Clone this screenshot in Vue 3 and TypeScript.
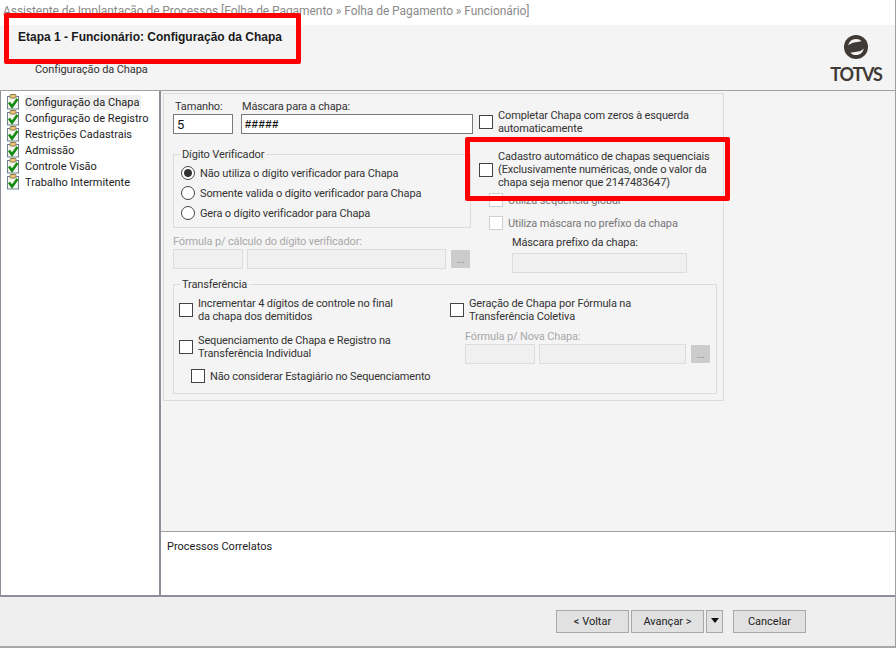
<script setup lang="ts">
const steps: string[] = [
  'Configuração da Chapa',
  'Configuração de Registro',
  'Restrições Cadastrais',
  'Admissão',
  'Controle Visão',
  'Trabalho Intermitente',
]
const radios: string[] = [
  'Não utiliza o dígito verificador para Chapa',
  'Somente valida o dígito verificador para Chapa',
  'Gera o dígito verificador para Chapa',
]
</script>

<template>
  <div class="win">
    <div class="titlebar">Assistente de Implantação de Processos [Folha de Pagamento » Folha de Pagamento » Funcionário]</div>
    <header class="head">
      <div class="head-text">
        <h1>Etapa 1 - Funcionário: Configuração da Chapa</h1>
        <p>Configuração da Chapa</p>
      </div>
      <div class="logo">
        <svg width="24" height="24" viewBox="0 0 24 24">
          <circle cx="12" cy="12" r="12" fill="#3f3a36" />
          <path d="M4.3 10.6C4.8 6.8 8 4 12 4c2.2 0 4.2.9 5.6 2.3L10 7.4c-2.4.4-4.4 1.6-5.7 3.2z" fill="#f4f4f4" />
          <path d="M19.7 13.4C19.2 17.2 16 20 12 20c-2.2 0-4.2-.9-5.6-2.3l7.6-1.1c2.4-.4 4.4-1.6 5.7-3.2z" fill="#f4f4f4" />
        </svg>
        <span>TOTVS</span>
      </div>
    </header>

    <main class="body">
      <nav class="steps">
        <div v-for="(s, i) in steps" :key="s" class="step">
          <svg width="14" height="16" viewBox="0 0 14 16" class="step-ico">
            <rect x="1.5" y="2.5" width="11" height="12.5" fill="#f4f4ec" stroke="#6f7f96" />
            <rect x="4" y="0.5" width="6" height="3.5" rx="1" fill="#e8c878" stroke="#8a7a4a" />
            <path d="M3 8.5l3 4 5.5-7.5" fill="none" stroke="#128a12" stroke-width="2.6" />
          </svg>
          <span :class="{ sel: i === 0 }">{{ s }}</span>
        </div>
      </nav>

      <section class="content">
        <div class="pane">
          <div class="frame">
            <div class="top">
              <div class="left">
                <div class="row-mask">
                  <label class="fld fld-size"><b>Tamanho:</b><span class="input">5</span></label>
                  <label class="fld fld-mask"><b>Máscara para a chapa:</b><span class="input mono">#####</span></label>
                </div>
                <fieldset class="group dv">
                  <legend>Dígito Verificador</legend>
                  <div v-for="(r, i) in radios" :key="r" class="radio">
                    <span class="dot" :class="{ on: i === 0 }"></span>{{ r }}
                  </div>
                </fieldset>
                <div class="off-label formula-l">Fórmula p/ cálculo do dígito verificador:</div>
                <div class="formula">
                  <span class="input off w70"></span>
                  <span class="input off w199"></span>
                  <span class="dots">...</span>
                </div>
              </div>

              <div class="right">
                <div class="check c1"><span class="box"></span><span class="txt">Completar Chapa com zeros à esquerda<br />automaticamente</span></div>
                <div class="check c2"><span class="box"></span><span class="txt">Cadastro automático de chapas sequenciais<br />(Exclusivamente numéricas, onde o valor da<br />chapa seja menor que 2147483647)</span></div>
                <div class="check c3 off-check"><span class="box off"></span><span class="txt">Utiliza sequência global</span></div>
                <div class="check c4 off-check"><span class="box off"></span><span class="txt">Utiliza máscara no prefixo da chapa</span></div>
                <div class="prefix">Máscara prefixo da chapa:</div>
                <span class="input off prefix-in"></span>
              </div>
            </div>

            <fieldset class="group tr">
              <legend>Transferência</legend>
              <div class="tr-grid">
                <div class="tr-left">
                  <div class="check"><span class="box"></span><span class="txt">Incrementar 4 dígitos de controle no final<br />da chapa dos demitidos</span></div>
                  <div class="check t2"><span class="box"></span><span class="txt">Sequenciamento de Chapa e Registro na<br />Transferência Individual</span></div>
                  <div class="check t3"><span class="box"></span><span class="txt">Não considerar Estagiário no Sequenciamento</span></div>
                </div>
                <div class="tr-right">
                  <div class="check"><span class="box"></span><span class="txt">Geração de Chapa por Fórmula na<br />Transferência Coletiva</span></div>
                  <div class="off-label nova-l">Fórmula p/ Nova Chapa:</div>
                  <div class="formula">
                    <span class="input off w70"></span>
                    <span class="input off w147"></span>
                    <span class="dots">...</span>
                  </div>
                </div>
              </div>
            </fieldset>
          </div>
        </div>
        <div class="related">Processos Correlatos</div>
      </section>
    </main>

    <footer class="foot">
      <button class="btn">&lt; Voltar</button>
      <button class="btn next">Avançar &gt;</button>
      <button class="btn drop"><i></i></button>
      <button class="btn cancel">Cancelar</button>
    </footer>

    <div class="mark mark-a"></div>
    <div class="mark mark-b"></div>
  </div>
</template>

<style>
html, body { margin: 0; background: #fff; }
</style>

<style scoped>
.win {
  position: relative;
  width: 896px;
  height: 648px;
  overflow: hidden;
  display: flex;
  flex-direction: column;
  box-sizing: border-box;
  font: 11px/13px Roboto, "Liberation Sans", Arial, sans-serif;
  color: #222;
  background: #f4f4f4;
  border-right: 1px solid #a0a0a0;
}
.titlebar {
  height: 25px;
  flex: none;
  background: #fff;
  color: #8a8a8a;
  font-size: 12px;
  letter-spacing: -0.07px;
  padding: 5px 0 0 3px;
  box-sizing: border-box;
  white-space: nowrap;
}
.head {
  height: 66px;
  flex: none;
  display: flex;
  justify-content: space-between;
  box-sizing: border-box;
  border-bottom: 1px solid #a0a0a0;
}
.head h1 {
  margin: 6px 0 0 18px;
  font-family: "Liberation Sans", Arial, sans-serif;
  font-size: 12px;
  line-height: 13px;
  font-weight: bold;
  color: #1a1a1a;
}
.head p { margin: 19px 0 0 35px; color: #333; letter-spacing: -0.1px; }
.logo {
  width: 52px;
  margin: 10px 13px 0 0;
  display: flex;
  flex-direction: column;
  align-items: center;
}
.logo span {
  font: bold 18px/18px Lato, "Liberation Sans", sans-serif;
  letter-spacing: -1.2px;
  color: #3f3a36;
  margin-top: 6px;
}
.body { flex: none; height: 506px; display: flex; }
.steps {
  width: 161px;
  flex: none;
  box-sizing: border-box;
  background: #fff;
  border-left: 1px solid #8e8f99;
  border-right: 2px solid #8e8f99;
  border-bottom: 2px solid #8e8f99;
  padding-top: 3px;
}
.step { height: 16px; display: flex; align-items: center; white-space: nowrap; }
.step-ico { margin: 0 5px 0 5px; flex: none; }
.step span { padding: 1px 2px 1px 0; }
.step span.sel { background: #efefef; }
.content { flex: 1; display: flex; flex-direction: column; min-width: 0; }
.pane { height: 440px; flex: none; padding: 2px 0 0 2px; box-sizing: border-box; }
.frame {
  width: 561px;
  height: 308px;
  box-sizing: border-box;
  border: 1px solid #dcdcdc;
  padding: 6px 5px 0 9px;
  letter-spacing: -0.14px;
}
.top { display: flex; height: 178px; }
.left { width: 300px; flex: none; }
.row-mask { display: flex; gap: 8px; }
.fld { display: flex; flex-direction: column; gap: 1px; color: #333; }
.fld b { font-weight: normal; padding-left: 1px; }
.fld-size b { padding-left: 2px; }
.fld-size { width: 60px; }
.fld-mask { width: 232px; }
.input {
  display: block;
  box-sizing: border-box;
  height: 20px;
  background: #fff;
  border: 1px solid #7a7a7a;
  padding: 2px 3px;
  color: #111;
  font-size: 13px;
  line-height: 15px;
}
.mono { font-family: "Liberation Sans", sans-serif; font-weight: bold; font-size: 11px; letter-spacing: 0.7px; }
.input.off { background: #f0f0f0; border: 1px solid #dcdcdc; }
.group {
  margin: 0;
  padding: 0;
  border: 1px solid #dcdcdc;
  box-sizing: border-box;
  min-width: 0;
}
.group legend { margin-left: 1px; padding: 0 2px; color: #333; }
.dv legend { margin-left: -1px; }
.dv { width: 298px; height: 80px; margin-top: 14px; padding: 2px 0 0 7px; }
.radio { height: 20px; display: flex; align-items: center; gap: 5px; color: #333; white-space: nowrap; }
.dot {
  width: 14px;
  height: 14px;
  box-sizing: border-box;
  border: 1px solid #444;
  border-radius: 50%;
  background: #fff;
  display: inline-block;
  flex: none;
}
.dot.on { background: radial-gradient(circle, #333 0 3.5px, #fff 4.5px); }
.off-label { color: #a8a8a8; }
.formula-l { margin-top: 7px; }
.formula { display: flex; gap: 4px; margin-top: 1px; align-items: center; }
.w70 { width: 70px; }
.w199 { width: 199px; }
.w147 { width: 147px; }
.dots {
  width: 19px;
  height: 18px;
  margin-left: 1px;
  background: #ccc;
  color: #888;
  text-align: center;
  line-height: 20px;
  font-size: 10px;
}
.right { flex: 1; padding-left: 6px; color: #333; }
.check { display: flex; align-items: center; gap: 5px; white-space: nowrap; color: #333; }
.box {
  width: 14px;
  height: 14px;
  box-sizing: border-box;
  border: 1px solid #444;
  background: #fff;
  flex: none;
}
.box.off { border-color: #d0d0d0; }
.off-check { color: #777; }
.c1 { margin-top: 9px; }
.c2 { margin-top: 15px; }
.c3, .c4 { margin-left: 10px; }
.c3 { margin-top: 4px; }
.c4 { margin-top: 9px; }
.prefix { margin: 6px 0 0 33px; }
.prefix-in { width: 175px; margin: 4px 0 0 33px; }
.tr { width: 544px; height: 116px; padding: 6px 0 0 5px; }
.tr-grid { display: flex; }
.tr-left { width: 271px; flex: none; }
.t2 { margin-top: 11px; }
.t3 { margin: 9px 0 0 12px; }
.tr-right { flex: 1; }
.nova-l { margin: 7px 0 0 15px; }
.tr-right .formula { margin: 1px 0 0 15px; }
.related {
  flex: 1;
  background: #fff;
  border-top: 1px solid #a0a0a0;
  border-bottom: 2px solid #8e8f99;
  padding: 8px 0 0 6px;
}
.foot {
  flex: 1;
  background: #efefef;
  border-bottom: 2px solid #a8a8a8;
  box-sizing: border-box;
  display: flex;
  gap: 2px;
  padding: 13px 0 0 556px;
  align-items: flex-start;
}
.btn {
  width: 73px;
  height: 23px;
  padding: 0;
  border: 1px solid #a8a8a8;
  background: #e1e1e1;
  color: #222;
  font: 11px Roboto, "Liberation Sans", Arial, sans-serif;
}
.drop { width: 17px; }
.drop i {
  display: block;
  width: 0;
  height: 0;
  margin: 0 auto 2px;
  border: 4.5px solid transparent;
  border-top: 5px solid #111;
  border-bottom: 0;
}
.cancel { margin-left: 8px; }
.mark { position: absolute; box-sizing: border-box; border: 5px solid #f00; border-radius: 2px; }
.mark-a { left: 4px; top: 13px; width: 297px; height: 51px; }
.mark-b { left: 465px; top: 137px; width: 265px; height: 64px; }
</style>
